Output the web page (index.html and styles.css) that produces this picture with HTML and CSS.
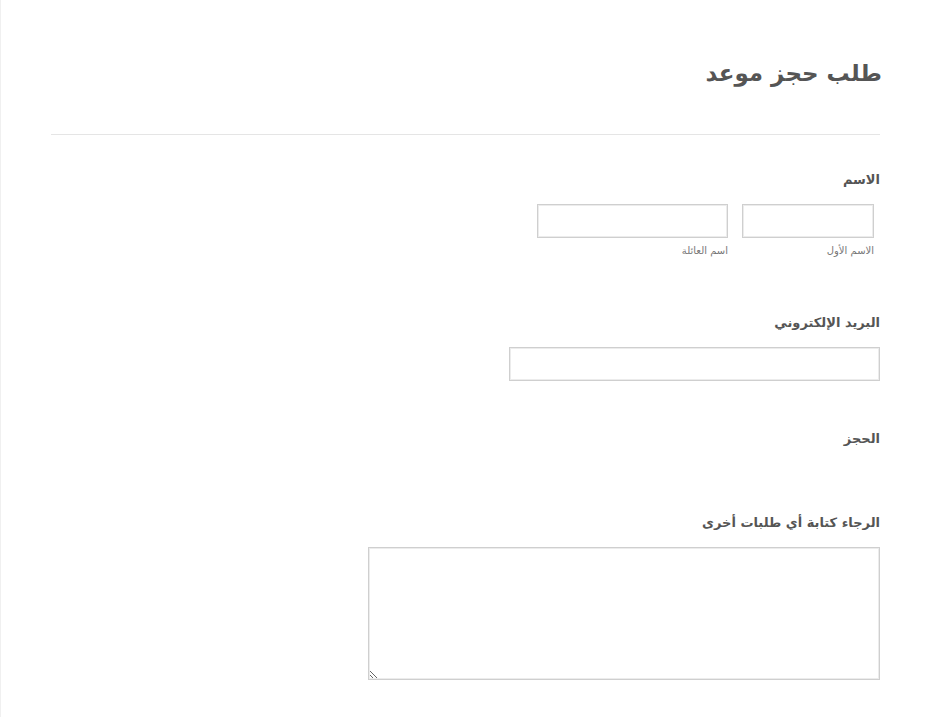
FILE: index.html
```html
<!DOCTYPE html>
<html lang="ar" dir="rtl">
<head>
    <meta charset="UTF-8">
    <meta name="viewport" content="width=device-width, initial-scale=1.0">
    <title>طلب حجز موعد</title>
    <link rel="stylesheet" href="styles.css">
</head>
<body>
    <form class="form">
        <div class="header">
            <h1>طلب حجز موعد</h1>
        </div>

        <div class="field field-name">
            <label class="label">الاسم</label>
            <div class="name-row">
                <div class="name-part">
                    <input type="text" class="input first">
                    <span class="sublabel">الاسم الأول</span>
                </div>
                <div class="name-part">
                    <input type="text" class="input last">
                    <span class="sublabel">اسم العائلة</span>
                </div>
            </div>
        </div>

        <div class="field field-email">
            <label class="label">البريد الإلكتروني</label>
            <input type="email" class="input email">
        </div>

        <div class="field field-booking">
            <label class="label">الحجز</label>
        </div>

        <div class="field field-other">
            <label class="label">الرجاء كتابة أي طلبات أخرى</label>
            <textarea class="textarea"></textarea>
        </div>
    </form>
</body>
</html>
```

FILE: styles.css
```css
html {
    background-color: #ffffff;
}
body {
    margin: 0;
    padding: 0;
    font-family: 'DejaVu Sans', 'Liberation Sans', Arial, sans-serif;
    color: #555555;
    background-color: #ffffff;
    border-left: 1px solid #f0f0f0; /* bordo sottile a sinistra */
    min-height: 717px;
    box-sizing: border-box;
}
.form {
    padding: 0 50px;
}
.header {
    padding-top: 55px;
    padding-bottom: 43px;
    border-bottom: 1px solid #e5e5e5;
}
h1 {
    margin: 0 -2px 0 0;
    font-size: 23px;
    line-height: 36px;
    font-weight: bold;
    color: #555555;
}
.label {
    display: block;
    font-size: 13px;
    line-height: 20px;
    font-weight: bold;
    color: #555555;
    margin-bottom: 14px;
}
.field-name {
    margin-top: 35px;
}
.field-email {
    margin-top: 55px;
}
.field-booking {
    margin-top: 48px;
}
.field-other {
    margin-top: 64px;
}
.name-row {
    display: flex;
    gap: 14px;
    padding-right: 6px;
}
.name-part {
    display: flex;
    flex-direction: column;
}
.input,
.textarea {
    display: block;
    box-sizing: border-box;
    height: 34px;
    margin: 0;
    padding: 4px 6px;
    border: 1px solid #cfcfcf;
    box-shadow: inset 0 0 0 1px #ececec;
    background-color: #ffffff;
    font-family: inherit;
    font-size: 14px;
    color: #555555;
    outline: none;
}
.input.first {
    width: 132px;
}
.input.last {
    width: 191px;
}
.input.email {
    width: 371px;
}
.sublabel {
    margin-top: 6px;
    font-size: 10px;
    line-height: 14px;
    color: #777777;
}
.textarea {
    width: 512px;
    height: 133px;
    resize: both;
}
```
